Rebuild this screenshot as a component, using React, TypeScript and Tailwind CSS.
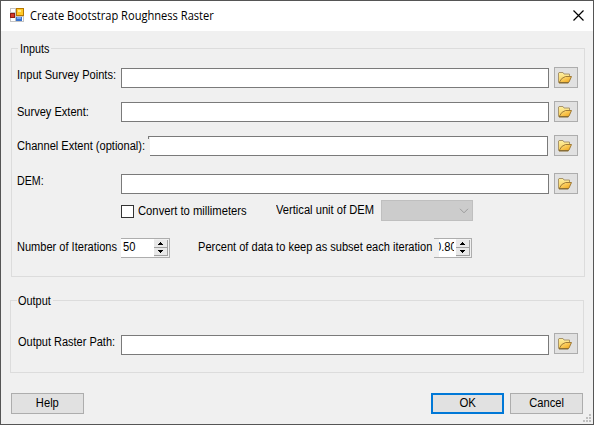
import type { ReactNode } from "react";

function Text({ children, className = "" }: { children: ReactNode; className?: string }) {
  return <span className={`block h-4 w-max whitespace-nowrap leading-4 ${className}`}>{children}</span>;
}

function FolderIcon() {
  return (
    <svg width="14" height="12" viewBox="0 0 14 12" className="block">
      <defs>
        <linearGradient id="back" x1="0" y1="0" x2="0" y2="1">
          <stop offset="0" stopColor="#fff0a0" />
          <stop offset="1" stopColor="#f6cd58" />
        </linearGradient>
        <linearGradient id="front" x1="0" y1="0" x2="1" y2="1">
          <stop offset="0" stopColor="#ffe88c" />
          <stop offset="1" stopColor="#f0a010" />
        </linearGradient>
      </defs>
      <path d="M.5 10.5V1l.5-.5h4l1 1.5h5.500v3" fill="url(#back)" stroke="#a8946c" />
      <path d="M1 10.8 3.800 6.500 7.500 4.500H13.500L11 10l-1 .8z" fill="url(#front)" stroke="#a07c38" />
      <path d="M1 10.800h9.400" stroke="#75602f" />
    </svg>
  );
}

function BrowseButton() {
  return (
    <button className="flex h-[21px] w-6 shrink-0 items-start border border-[#adadad] bg-[#e1e1e1] pt-1 pl-[3px]">
      <FolderIcon />
    </button>
  );
}

function NumberBox({ children, className = "" }: { children: ReactNode; className?: string }) {
  return (
    <div className={`flex h-5 shrink-0 border-y border-r border-[#adadad] bg-white ${className}`}>
      <div className="h-[18px] min-w-0 flex-1 overflow-hidden">{children}</div>
      <div className="flex w-[15px] shrink-0 flex-col border-r border-[#f0f0f0] bg-[#f0f0f0] pt-px">
        {["M2 4 4.5 1 7 4z", "M2 1 4.5 4 7 1z"].map((d) => (
          <div key={d} className="flex h-[8px] w-[14px] items-center justify-center border-r border-b border-[#a0a0a0] bg-[#e8e8e8]">
            <svg width="9" height="5" viewBox="0 0 9 5" shapeRendering="crispEdges">
              <path d={d} fill="#000" />
            </svg>
          </div>
        ))}
      </div>
    </div>
  );
}

export default function App() {
  return (
    <div className="flex h-[425px] w-[594px] flex-col border border-[#555] bg-[#f0f0f0] font-['Liberation_Sans',Arial,sans-serif] text-[12px] text-black">
      <header className="flex h-[30px] shrink-0 items-start bg-white">
        <svg width="14" height="14" viewBox="0 0 14 14" className="mt-[7px] ml-[9px]" shapeRendering="crispEdges">
          <path d="M0 0h14v14H0z" fill="#c4c4c4" />
          <path d="M1 1h4v3H1zM1 10h4v3H1zM12 9h1v4h-1z" fill="#fff" />
          <path d="M6 0h8v8H6z" fill="#b87800" />
          <path d="M7 1h6v6H7z" fill="#ffc928" />
          <path d="M8 2h3v2H8z" fill="#ffe88c" />
          <path d="M0 5h5v5H0z" fill="#8e1d14" />
          <path d="M1 6h3v3H1z" fill="#d63a2a" />
          <path d="M6 9h6v4H6z" fill="#3a72cc" />
          <path d="M7 9h4v2H7z" fill="#79a8f0" />
        </svg>
        <Text className="mt-[7px] ml-1.5 origin-left scale-x-[.925] font-['Open_Sans',sans-serif]">Create Bootstrap Roughness Raster</Text>
        <svg width="11" height="11" viewBox="0 0 11 11" className="mt-[9px] mr-[9px] ml-auto">
          <path d="m.5.5 10 10m0-10-10 10" stroke="#000" strokeWidth="1.2" />
        </svg>
      </header>

      <fieldset className="mt-[9px] ml-2.5 h-[237px] w-[574px] border border-[#dcdcdc] pl-[5px]">
        <legend className="ml-px h-[17px] w-[33px] pt-px pl-[2px]">
          <Text className="origin-left scale-x-[.9]">Inputs</Text>
        </legend>
        <div className="mt-2.5 flex h-[21px]">
          <div className="w-[104px]"><Text className="origin-left scale-x-[.922]">Input Survey Points:</Text></div>
          <div className="mt-px mr-[5px] h-5 w-[428px] border border-[#7a7a7a] bg-white" />
          <BrowseButton />
        </div>
        <div className="mt-[13px] flex h-[21px]">
          <div className="w-[104px] pt-[3px]"><Text className="origin-left scale-x-[.92]">Survey Extent:</Text></div>
          <div className="mt-px mr-[5px] h-5 w-[428px] border border-[#7a7a7a] bg-white" />
          <BrowseButton />
        </div>
        <div className="mt-[13px] flex h-[21px]">
          <div className="w-[131px] pt-[3px]"><Text className="origin-left scale-x-[.923]">Channel Extent (optional):</Text></div>
          <div className="mt-px mr-1.5 flex h-5 w-[400px] border-y border-r border-[#7a7a7a] bg-white">
            <div className="h-[19px] w-0.5 shrink-0 bg-[#f0f0f0]">
              <div className="h-0.5 w-px bg-[#7a7a7a]" />
            </div>
          </div>
          <BrowseButton />
        </div>
        <div className="mt-[17px] flex h-[21px]">
          <div className="w-[104px]"><Text className="origin-left scale-x-[.89]">DEM:</Text></div>
          <div className="mt-px mr-[5px] h-5 w-[428px] border border-[#7a7a7a] bg-white" />
          <BrowseButton />
        </div>
        <div className="mt-1.5 ml-[104px] flex h-[21px]">
          <div className="mt-[5px] size-[13px] border border-[#333] bg-white" />
          <div className="w-[138px] pt-[3px] pl-1"><Text className="origin-left scale-x-[.937]">Convert to millimeters</Text></div>
          <div className="w-[109px] pt-0.5 pl-1"><Text className="origin-left scale-x-[.93]">Vertical unit of DEM</Text></div>
          <div className="flex h-[21px] w-[92px] items-center justify-end border border-[#bfbfbf] bg-[#ccc] pr-[3px]">
            <svg width="10" height="6" viewBox="0 0 10 6"><path d="m1 .8 4 4 4-4" fill="none" stroke="#9b9b9b" /></svg>
          </div>
        </div>
        <div className="mt-[17px] flex h-5">
          <div className="w-[104px] pt-px"><Text className="origin-left scale-x-[.92]">Number of Iterations</Text></div>
          <NumberBox className="w-[49px]"><Text className="ml-0.5 origin-left scale-x-[.93]">50</Text></NumberBox>
          <div className="w-[264px] pt-px pl-7"><Text className="origin-left scale-x-[.922]">Percent of data to keep as subset each iteration</Text></div>
          <NumberBox className="w-[38px]">
            <div className="flex h-[18px]">
              <div className="h-[18px] w-[5px] shrink-0 bg-[#f0f0f0]" />
              <div className="h-[18px] w-[15px] overflow-hidden"><Text className="-ml-[4px] origin-left scale-x-[.93]">0.80</Text></div>
            </div>
          </NumberBox>
        </div>
      </fieldset>

      <fieldset className="mt-[15px] ml-[9px] h-[81px] w-[574px] border border-[#dcdcdc] pl-[7px]">
        <legend className="-ml-px h-[17px] w-9 pt-px pl-px">
          <Text className="origin-left scale-x-[.91]">Output</Text>
        </legend>
        <div className="mt-6 flex h-[22px]">
          <div className="w-[103px] pt-px"><Text className="origin-left scale-x-[.915]">Output Raster Path:</Text></div>
          <div className="mt-0.5 mr-[5px] h-5 w-[428px] border border-[#7a7a7a] bg-white" />
          <BrowseButton />
        </div>
      </fieldset>

      <footer className="mt-5 ml-2.5 flex">
        <button className="flex h-[21px] w-[73px] justify-center border border-[#adadad] bg-[#e1e1e1] pt-px"><Text className="scale-x-[.93]">Help</Text></button>
        <button className="ml-[347px] flex h-[21px] w-[73px] justify-center border-2 border-[#0078d7] bg-[#e1e1e1] pl-px"><Text className="scale-x-[.95]">OK</Text></button>
        <button className="ml-1.5 flex h-[21px] w-[73px] justify-center border border-[#adadad] bg-[#e1e1e1] pt-px"><Text className="scale-x-[.93]">Cancel</Text></button>
        <svg width="8" height="8" viewBox="0 0 8 8" className="mt-[21px] -mr-2 shrink-0" shapeRendering="crispEdges">
          <path d="M6 0h2v2H6zM3 3h2v2H3zM6 3h2v2H6zM0 6h2v2H0zM3 6h2v2H3zM6 6h2v2H6z" fill="#bfbfbf" />
        </svg>
      </footer>
    </div>
  );
}
